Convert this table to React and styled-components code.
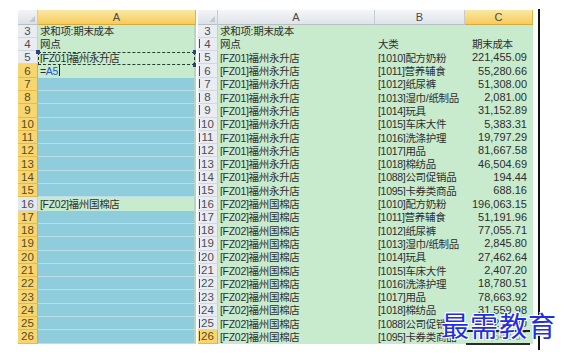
import { createGlobalStyle, styled } from "styled-components"

const GlobalStyle = createGlobalStyle`
  html, body {
    margin: 0;
    padding: 0;
    background: #fff;
  }
  body {
    font-family: "Liberation Sans", "Noto Sans CJK SC", sans-serif;
    font-size: 11px;
    color: #2e2e2e;
  }
`

const categories = [
  "[1010]配方奶粉",
  "[1011]营养辅食",
  "[1012]纸尿裤",
  "[1013]湿巾/纸制品",
  "[1014]玩具",
  "[1015]车床大件",
  "[1016]洗涤护理",
  "[1017]用品",
  "[1018]棉纺品",
  "[1088]公司促销品",
  "[1095]卡券类商品",
]

const fz01 = ["221,455.09", "55,280.66", "51,308.00", "2,081.00", "31,152.89", "5,383.31", "19,797.29", "81,667.58", "46,504.69", "194.44", "688.16"]
const fz02 = ["196,063.15", "51,191.96", "77,055.71", "2,845.80", "27,462.64", "2,407.20", "18,780.51", "78,663.92", "31,559.98", "215.30", "3,642.55"]

const dataRows = [
  ...categories.map((c, i) => ({ shop: "[FZ01]福州永升店", cat: c, val: fz01[i] })),
  ...categories.map((c, i) => ({ shop: "[FZ02]福州国棉店", cat: c, val: fz02[i] })),
]

const Page = styled.div`
  position: relative;
  width: 566px;
  height: 360px;
  overflow: hidden;
  display: flex;
  align-items: flex-start;
  padding: 10px 0 0 18px;
  box-sizing: border-box;
`

const Sheet = styled.div`
  display: grid;
  grid-template-columns: ${(p) => p.$cols};
  grid-template-rows: 14.5px;
  grid-auto-rows: 13.3px;
  height: ${(p) => p.$height}px;
  overflow: hidden;
  margin-right: ${(p) => p.$gap || 0}px;
  position: relative;
`

const Corner = styled.div`
  background: linear-gradient(#f3f4f6, #dde1e6);
  border-right: 1px solid #c6cbd2;
  border-bottom: 1px solid #b9bfc7;
  position: relative;
  &::after {
    content: "";
    position: absolute;
    right: 2px;
    bottom: 2px;
    border-left: 6px solid transparent;
    border-bottom: 6px solid #c4c8ce;
  }
`

const ColHeader = styled.div`
  display: flex;
  align-items: center;
  justify-content: center;
  font-size: 11px;
  color: #4a4a4a;
  border-right: 1px solid ${(p) => (p.$active ? "#e0b547" : "#c6cbd2")};
  border-bottom: 1px solid ${(p) => (p.$active ? "#d9a93a" : "#b9bfc7")};
  background: ${(p) =>
    p.$active ? "linear-gradient(#fbe7a6, #f6cc5a)" : "linear-gradient(#f4f5f7, #e0e4e9)"};
`

const RowHeader = styled.div`
  display: flex;
  align-items: center;
  justify-content: center;
  font-size: 11.5px;
  color: ${(p) => (p.$yellow ? "#5a4a20" : "#4d4d55")};
  box-sizing: border-box;
  border-bottom: 1px solid ${(p) => (p.$yellow ? "#e4bb4f" : "#d3d7de")};
  border-right: 1px solid ${(p) => (p.$yellow ? "#dcae3e" : "#c9ced6")};
  background-color: ${(p) => (p.$yellow ? "#f8d66f" : p.$pale ? "#e3e9f1" : "#e9ecf0")};
  background-image: ${(p) => (p.$mark ? "linear-gradient(#4a4a4a, #4a4a4a)" : "none")};
  background-size: 1px calc(100% - 3px);
  background-repeat: no-repeat;
  background-position: 1px center;
`

const Cell = styled.div`
  display: flex;
  align-items: center;
  justify-content: ${(p) => (p.$right ? "flex-end" : "flex-start")};
  padding: ${(p) => (p.$right ? "0 6px 0 0" : `0 0 0 ${p.$pad ?? 2}px`)};
  font-size: ${(p) => (p.$right ? "11px" : "10.5px")};
  letter-spacing: ${(p) => (p.$right ? "0" : "-0.3px")};
  white-space: nowrap;
  overflow: hidden;
  box-sizing: border-box;
  background: ${(p) => (p.$blue ? "#8fcddd" : "#c8eacd")};
  border-bottom: 1px solid ${(p) => (p.$blue ? "#b9e0ea" : "#c8eacd")};
  border-right: ${(p) => (p.$edge ? "2px solid #b6d4c0" : "none")};
`

const Blue = styled.span`
  color: #2458d6;
`

const Caret = styled.span`
  display: inline-block;
  width: 1px;
  height: 11px;
  margin-left: 1px;
  background: #222;
`

const Marquee = styled.div`
  position: absolute;
  left: 20px;
  top: 41.5px;
  width: 157px;
  height: 13px;
  box-sizing: border-box;
  border: 1.5px dashed #24402c;
  pointer-events: none;
`

const Handle = styled.span`
  position: absolute;
  width: 4px;
  height: 4px;
  background: #24408f;
  ${(p) => p.$pos}
`

const Divider = styled.div`
  width: 2px;
  height: 341px;
  margin: -1px 0 0 5px;
  background: #111;
`

const Watermark = styled.div`
  position: absolute;
  left: 441px;
  top: 309px;
  font-family: "Noto Sans CJK SC", sans-serif;
  font-size: 28px;
  letter-spacing: 1px;
  color: #1e2ee0;
  text-shadow: 1px 1px 0 #fff, -1px -1px 0 #fff, 1px -1px 0 #fff, -1px 1px 0 #fff;
  line-height: 1.2;
`

const TipBox = styled.div`
  position: absolute;
  left: 466px;
  top: 330px;
  width: 64px;
  height: 11px;
  border-top: 2px solid #1f1f1f;
  border-bottom: 2px solid #2a2a2a;
  background: rgba(200, 234, 205, 0.6);
`

const leftRows = Array.from({ length: 24 }, (_, i) => i + 3)

const LeftSheet = () => (
  <Sheet $cols="20px 158px" $height={335} $gap={2}>
    <Corner />
    <ColHeader $active>A</ColHeader>
    {leftRows.map((r) => {
      const grey = [3, 4, 5, 16].includes(r)
      const green = [3, 4, 5, 6, 16].includes(r)
      let content = null
      if (r === 3) content = "求和项:期末成本"
      if (r === 4) content = "网点"
      if (r === 5) content = "[FZ01]福州永升店"
      if (r === 6)
        content = (
          <>
            =<Blue>A5</Blue>
            <Caret />
          </>
        )
      if (r === 16) content = "[FZ02]福州国棉店"
      return [
        <RowHeader key={`h${r}`} $yellow={!grey} $pale={r === 16}>
          {r}
        </RowHeader>,
        <Cell key={`a${r}`} $blue={!green} $edge>
          {content}
        </Cell>,
      ]
    })}
    <Marquee>
      <Handle $pos="left: -3px; top: -3px;" />
      <Handle $pos="right: -3px; top: -3px;" />
      <Handle $pos="right: -3px; bottom: -3px;" />
    </Marquee>
  </Sheet>
)

const RightSheet = () => (
  <Sheet $cols="20px 157px 90px 68px" $height={337}>
    <Corner />
    <ColHeader>A</ColHeader>
    <ColHeader>B</ColHeader>
    <ColHeader $active>C</ColHeader>

    <RowHeader>3</RowHeader>
    <Cell>求和项:期末成本</Cell>
    <Cell />
    <Cell />

    <RowHeader $mark>4</RowHeader>
    <Cell>网点</Cell>
    <Cell $pad={3}>大类</Cell>
    <Cell $pad={7}>期末成本</Cell>

    {dataRows.map((d, i) => {
      const r = i + 5
      return [
        <RowHeader key={`h${r}`} $mark $yellow={r === 26}>
          {r}
        </RowHeader>,
        <Cell key={`a${r}`}>{d.shop}</Cell>,
        <Cell key={`b${r}`} $pad={3}>
          {d.cat}
        </Cell>,
        <Cell key={`c${r}`} $right>
          {d.val}
        </Cell>,
      ]
    })}
  </Sheet>
)

const App = () => (
  <>
    <GlobalStyle />
    <Page>
      <LeftSheet />
      <RightSheet />
      <Divider />
      <TipBox />
      <Watermark>最需教育</Watermark>
    </Page>
  </>
)

export default App
